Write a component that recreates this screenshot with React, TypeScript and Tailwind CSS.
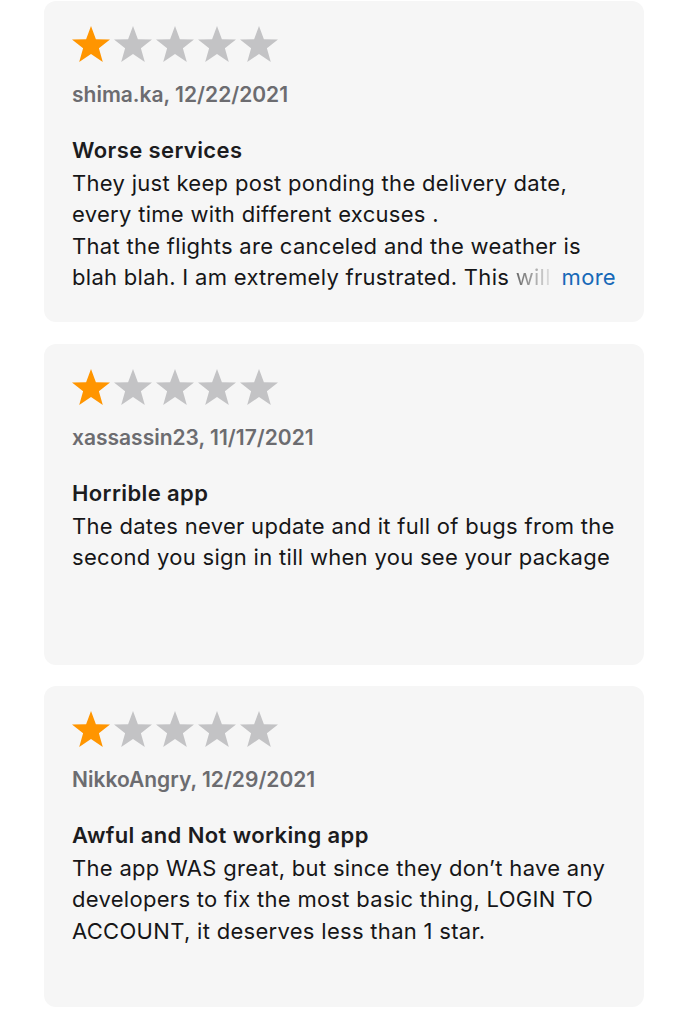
import React from "react";

const Star = ({ filled }: { filled: boolean }) => (
  <svg width="42" height="40" viewBox="0 0 42 40" className="block">
    <polygon
      points="21,1 25.9,14.3 40,14.6 28.9,23.3 32.8,37 21,29 9.2,37 13.1,23.3 2,14.6 16.1,14.3"
      fill={filled ? "#ff9500" : "#c3c3c5"}
    />
  </svg>
);

const Stars = () => (
  <div className="flex h-[40px] ml-[-2px]">
    <Star filled />
    <Star filled={false} />
    <Star filled={false} />
    <Star filled={false} />
    <Star filled={false} />
  </div>
);

type Review = {
  author: string;
  title: string;
  lines: string[];
  more?: boolean;
};

const reviews: Review[] = [
  {
    author: "shima.ka, 12/22/2021",
    title: "Worse services",
    lines: [
      "They just keep post ponding the delivery date,",
      "every time with different excuses .",
      "That the flights are canceled and the weather is",
      "blah blah. I am extremely frustrated. This ",
    ],
    more: true,
  },
  {
    author: "xassassin23, 11/17/2021",
    title: "Horrible app",
    lines: [
      "The dates never update and it full of bugs from the",
      "second you sign in till when you see your package",
    ],
  },
  {
    author: "NikkoAngry, 12/29/2021",
    title: "Awful and Not working app",
    lines: [
      "The app WAS great, but since they don\u2019t have any",
      "developers to fix the most basic thing, LOGIN TO",
      "ACCOUNT, it deserves less than 1 star.",
    ],
  },
];

const Card = ({ r }: { r: Review }) => (
  <div className="h-[321px] rounded-[12px] bg-[#f6f6f6] pl-[28px] pr-[28px] pt-[24px] overflow-hidden">
    <Stars />
    <div className="mt-[14px] text-[21px] leading-[31px] font-semibold text-[#6c6c70] whitespace-nowrap">
      {r.author}
    </div>
    <div className="mt-[25px] text-[22px] leading-[31px] font-semibold tracking-[0.4px] text-[#1c1c1e] whitespace-nowrap">
      {r.title}
    </div>
    <div className="mt-[2px] text-[22px] leading-[31.3px] tracking-[0.3px] text-[#161618]">
      {r.lines.map((l, i) => {
        const last = r.more && i === r.lines.length - 1;
        if (!last)
          return (
            <div key={i} className="whitespace-nowrap">
              {l}
            </div>
          );
        return (
          <div key={i} className="flex whitespace-pre">
            <span>{l}</span>
            <span className="bg-gradient-to-r from-[#6a6a6a] to-[#e4e4e4] bg-clip-text text-transparent">
              will
            </span>
            <span className="ml-auto text-[#1769b8]">more</span>
          </div>
        );
      })}
    </div>
  </div>
);

export default function App() {
  return (
    <div
      className="w-[687px] h-[1024px] bg-white overflow-hidden"
      style={{ fontFamily: "Inter, 'Noto Sans', sans-serif" }}
    >
      <div className="ml-[44px] w-[600px] pt-[1px] flex flex-col gap-[21.5px]">
        {reviews.map((r, i) => (
          <Card key={i} r={r} />
        ))}
      </div>
    </div>
  );
}
